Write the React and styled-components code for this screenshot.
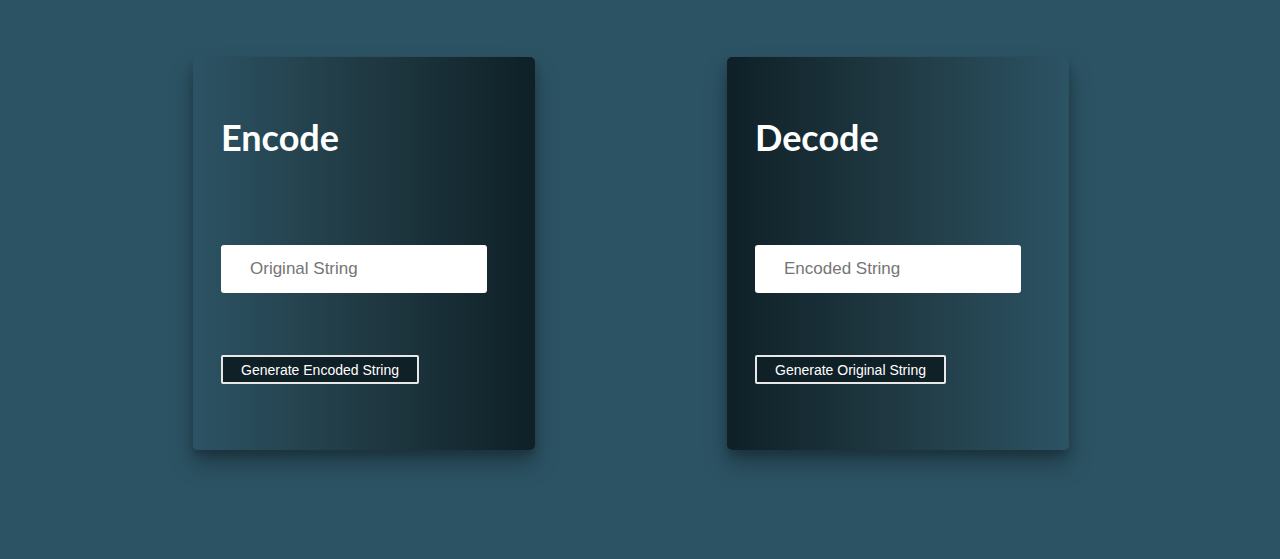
import React from 'react';
import styled, { createGlobalStyle } from 'styled-components';

const GlobalStyle = createGlobalStyle`
  html, body {
    margin: 0;
    padding: 0;
    background: #2c5364;
    height: 100%;
  }
  #root {
    min-height: 100%;
  }
`;

const Page = styled.div`
  display: flex;
  gap: 192px;
  padding: 57px 0 0 193px;
  min-height: 559px;
  box-sizing: border-box;
  background: #2c5364;
`;

const Card = styled.div`
  width: 342px;
  height: 393px;
  box-sizing: border-box;
  padding: 60px 28px 0;
  border-radius: 5px;
  display: flex;
  flex-direction: column;
  align-items: flex-start;
  background: ${({ $reverse }) =>
    $reverse
      ? 'linear-gradient(to right, #0f2027, #203a43, #2c5364)'
      : 'linear-gradient(to right, #2c5364, #203a43, #0f2027)'};
  box-shadow: 0 14px 24px rgba(0, 0, 0, 0.28), 0 6px 8px rgba(0, 0, 0, 0.18);
`;

const Title = styled.h1`
  margin: 0;
  font-family: Lato, "Open Sans", sans-serif;
  font-weight: 700;
  font-size: 36px;
  line-height: 40px;
  color: #fff;
`;

const Input = styled.input`
  margin-top: 88px;
  width: 266px;
  height: 48px;
  box-sizing: border-box;
  border: none;
  border-radius: 3px;
  padding: 0 29px;
  font-family: "Liberation Sans", Arial, sans-serif;
  font-size: 17px;
  color: #333;
  background: #fff;
  outline: none;
  &::placeholder {
    color: #757575;
  }
`;

const Button = styled.button`
  margin-top: 62px;
  height: 29px;
  padding: 0 18px;
  box-sizing: border-box;
  border: 2px solid #e8e8e8;
  border-radius: 2px;
  background: #0f2027;
  color: #fff;
  font-family: "Liberation Sans", Arial, sans-serif;
  font-size: 14px;
  cursor: pointer;
`;

const Panel = ({ title, placeholder, action, reverse }) => (
  <Card $reverse={reverse}>
    <Title>{title}</Title>
    <Input placeholder={placeholder} />
    <Button>{action}</Button>
  </Card>
);

export default function App() {
  return (
    <>
      <GlobalStyle />
      <Page>
        <Panel title="Encode" placeholder="Original String" action="Generate Encoded String" />
        <Panel title="Decode" placeholder="Encoded String" action="Generate Original String" reverse />
      </Page>
    </>
  );
}
